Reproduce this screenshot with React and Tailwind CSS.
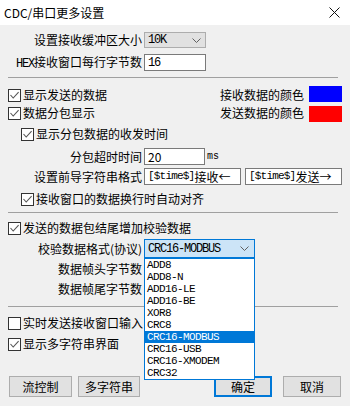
import React from "react";

const cjk = "font-['Noto_Sans_CJK_SC','Noto_Sans',sans-serif]";
const mono = "font-['Liberation_Mono',monospace]";
const sim = `${mono} text-[12px] tracking-[-1.2px] leading-none`;

const Check = ({ checked }) => (
  <span className="w-[13px] h-[13px] border border-[#333333] bg-white flex items-center justify-center shrink-0">
    {checked && (
      <svg width="11" height="11" viewBox="0 0 11 11">
        <path d="M1.5 5 L4.2 8 L9.6 2.2" stroke="#555555" strokeWidth="1.1" fill="none" />
      </svg>
    )}
  </span>
);

const Chevron = () => (
  <svg width="9" height="5" viewBox="0 0 9 5">
    <path d="M0.5 0.5 L4.5 4.5 L8.5 0.5" stroke="#606060" strokeWidth="1" fill="none" />
  </svg>
);

const CheckRow = ({ checked, indent, children, className = "" }) => (
  <div className={`h-[18px] flex items-center ${indent ? "pl-[13px]" : ""} ${className}`}>
    <Check checked={checked} />
    <span className="ml-[2px] text-[12px] leading-none">{children}</span>
  </div>
);

const Label = ({ children }) => (
  <span className="w-[135px] text-right text-[12px] leading-none pr-[1px] shrink-0">{children}</span>
);

const Btn = ({ children, primary, className = "" }) => (
  <div
    className={`h-[21px] flex items-center justify-center text-[12px] bg-[#e1e1e1] ${
      primary ? "border-2 border-[#0078d7]" : "border border-[#adadad]"
    } ${className}`}
  >
    {children}
  </div>
);

const options = [
  "ADD8",
  "ADD8-N",
  "ADD16-LE",
  "ADD16-BE",
  "XOR8",
  "CRC8",
  "CRC16-MODBUS",
  "CRC16-USB",
  "CRC16-XMODEM",
  "CRC32",
];

export default function App() {
  return (
    <div className={`w-[350px] h-[406px] bg-[#f0f0f0] relative overflow-hidden text-black ${cjk}`}>
      {/* title bar */}
      <div className="h-[25px] bg-white flex items-center justify-between pl-[4px] pr-[10px]">
        <span className="text-[12px] leading-none">CDC/串口更多设置</span>
        <svg width="11" height="11" viewBox="0 0 11 11">
          <path d="M0.5 0.5 L10.5 10.5 M10.5 0.5 L0.5 10.5" stroke="#111" strokeWidth="1" />
        </svg>
      </div>

      <div className="px-[8px] flex flex-col">
        <div className="mt-[7px] h-[16px] flex items-center">
          <Label>设置接收缓冲区大小</Label>
          <div className="ml-[1px] w-[62px] h-[16px] bg-[#e1e1e1] border border-[#adadad] flex items-center justify-between pl-[3px] pr-[4px]">
            <span className={sim}>10K</span>
            <Chevron />
          </div>
        </div>

        <div className="mt-[6px] h-[17px] flex items-center">
          <Label>
            <span className={`${mono} text-[12px] tracking-[-1.2px]`}>HEX</span>接收窗口每行字节数
          </Label>
          <div className="ml-[1px] w-[62px] h-[17px] bg-white border border-[#7a7a7a] flex items-center pl-[3px]">
            <span className={sim}>16</span>
          </div>
        </div>

        <div className="mt-[6px] h-px bg-[#a0a0a0] w-[330px]" />

        <div className="mt-[8px] flex items-center justify-between">
          <CheckRow checked>显示发送的数据</CheckRow>
          <div className="flex items-center">
            <span className="text-[12px] leading-none">接收数据的颜色</span>
            <span className="ml-[5px] w-[33px] h-[16px] bg-[#0000ff] -mt-[3px]" />
          </div>
        </div>

        <div className="flex items-center justify-between">
          <CheckRow checked>数据分包显示</CheckRow>
          <div className="flex items-center">
            <span className="text-[12px] leading-none">发送数据的颜色</span>
            <span className="ml-[5px] w-[33px] h-[16px] bg-[#ff0000] mt-[2px]" />
          </div>
        </div>

        <CheckRow checked indent className="mt-[3px]">
          显示分包数据的收发时间
        </CheckRow>

        <div className="mt-[5px] h-[17px] flex items-center">
          <Label>分包超时时间</Label>
          <div className="ml-[1px] w-[61px] h-[17px] bg-white border border-[#7a7a7a] flex items-center pl-[3px]">
            <span className="text-[12px] leading-none">20</span>
          </div>
          <span className={`ml-[2px] ${mono} text-[10px] leading-none`}>ms</span>
        </div>

        <div className="mt-[3px] h-[17px] flex items-center">
          <Label>设置前导字符串格式</Label>
          <div className="ml-[1px] w-[97px] h-[17px] bg-white border border-[#7a7a7a] flex items-center pl-[3px] whitespace-nowrap">
            <span className={`${mono} text-[11px] tracking-[-0.8px] leading-none`}>[$time$]</span>
            <span className="text-[12px] leading-none">接收←</span>
          </div>
          <div className="ml-[4px] w-[97px] h-[17px] bg-white border border-[#7a7a7a] flex items-center pl-[3px] whitespace-nowrap">
            <span className={`${mono} text-[11px] tracking-[-0.8px] leading-none`}>[$time$]</span>
            <span className="text-[12px] leading-none">发送→</span>
          </div>
        </div>

        <CheckRow checked indent className="mt-[5px]">
          接收窗口的数据换行时自动对齐
        </CheckRow>

        <div className="mt-[4px] h-px bg-[#a0a0a0] w-[330px]" />

        <CheckRow checked className="mt-[6px]">
          发送的数据包结尾增加校验数据
        </CheckRow>

        <div className="mt-[2px] h-[19px] flex items-center">
          <Label>校验数据格式(协议)</Label>
          <div className="ml-[1px] w-[111px] h-[19px] bg-[#cce4f7] border border-[#0078d7] flex items-center justify-between pl-[3px] pr-[5px]">
            <span className={sim}>CRC16-MODBUS</span>
            <Chevron />
          </div>
        </div>

        <div className="mt-[2px] h-[18px] flex items-center">
          <Label>数据帧头字节数</Label>
          <div className="ml-[1px] w-[61px] h-[17px] bg-white border border-[#7a7a7a]" />
        </div>

        <div className="mt-[2px] h-[18px] flex items-center">
          <Label>数据帧尾字节数</Label>
          <div className="ml-[1px] w-[61px] h-[17px] bg-white border border-[#7a7a7a]" />
        </div>

        <div className="mt-[8px] h-px bg-[#a0a0a0] w-[330px]" />

        <CheckRow className="mt-[7px]">实时发送接收窗口输入</CheckRow>
        <CheckRow checked className="mt-[3px]">
          显示多字符串界面
        </CheckRow>

        <div className="mt-[23px] flex items-center">
          <Btn className="ml-[1px] w-[63px]">流控制</Btn>
          <Btn className="ml-[6px] w-[62px]">多字符串</Btn>
          <Btn primary className="ml-[74px] w-[58px]">
            确定
          </Btn>
          <Btn className="ml-[11px] w-[58px]">取消</Btn>
        </div>
      </div>

      {/* open dropdown list */}
      <div className="absolute left-[144px] top-[258px] w-[111px] bg-white border border-[#0078d7] flex flex-col">
        {options.map((o) => (
          <div
            key={o}
            className={`h-[12px] flex items-center pl-[2px] ${mono} text-[11px] tracking-[-0.6px] leading-none ${
              o === "CRC16-MODBUS" ? "bg-[#0078d7] text-white" : ""
            }`}
          >
            {o}
          </div>
        ))}
      </div>
    </div>
  );
}
